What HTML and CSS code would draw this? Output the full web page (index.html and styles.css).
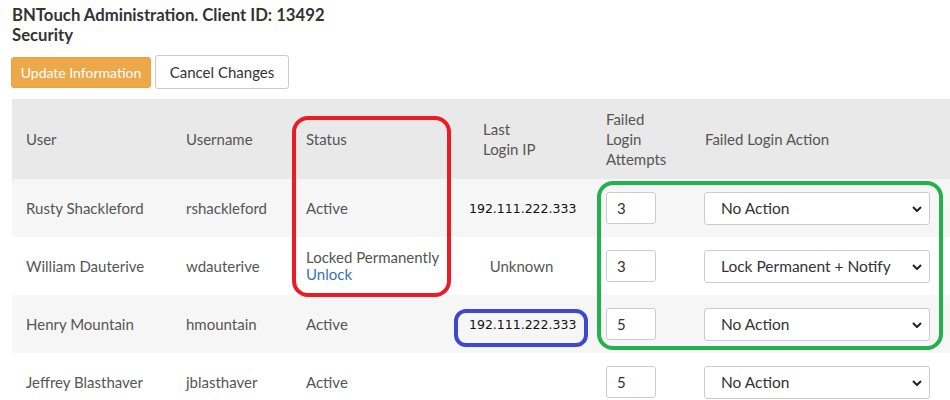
FILE: index.html
```html
<!DOCTYPE html>
<html>
<head>
<meta charset="utf-8">
<link rel="stylesheet" href="styles.css">
</head>
<body>
<div class="page">
  <h1 class="title">BNTouch Administration. Client ID: 13492<br>Security</h1>
  <div class="actions">
    <button class="btn btn-primary">Update Information</button>
    <button class="btn btn-default">Cancel Changes</button>
  </div>
  <div class="table-wrap">
    <table class="grid">
      <colgroup>
        <col class="c-user"><col class="c-uname"><col class="c-status"><col class="c-ip"><col class="c-att"><col class="c-act">
      </colgroup>
      <thead>
        <tr>
          <th>User</th>
          <th>Username</th>
          <th>Status</th>
          <th>Last<br>Login IP</th>
          <th>Failed<br>Login<br>Attempts</th>
          <th>Failed Login Action</th>
        </tr>
      </thead>
      <tbody>
        <tr class="odd">
          <td>Rusty Shackleford</td>
          <td>rshackleford</td>
          <td>Active</td>
          <td class="ip">192.111.222.333</td>
          <td><input class="num" type="text" value="3"></td>
          <td><div class="sel"><select><option>No Action</option></select><svg class="chev" viewBox="0 0 10 6" width="10" height="6"><path d="M1 1 L5 5 L9 1" fill="none" stroke="#222" stroke-width="2"/></svg></div></td>
        </tr>
        <tr>
          <td>William Dauterive</td>
          <td>wdauterive</td>
          <td class="multi">Locked Permanently<br><a class="link" href="#">Unlock</a></td>
          <td class="ip unknown">Unknown</td>
          <td><input class="num" type="text" value="3"></td>
          <td><div class="sel"><select><option>Lock Permanent + Notify</option></select><svg class="chev" viewBox="0 0 10 6" width="10" height="6"><path d="M1 1 L5 5 L9 1" fill="none" stroke="#222" stroke-width="2"/></svg></div></td>
        </tr>
        <tr class="odd">
          <td>Henry Mountain</td>
          <td>hmountain</td>
          <td>Active</td>
          <td class="ip">192.111.222.333</td>
          <td><input class="num" type="text" value="5"></td>
          <td><div class="sel"><select><option>No Action</option></select><svg class="chev" viewBox="0 0 10 6" width="10" height="6"><path d="M1 1 L5 5 L9 1" fill="none" stroke="#222" stroke-width="2"/></svg></div></td>
        </tr>
        <tr>
          <td>Jeffrey Blasthaver</td>
          <td>jblasthaver</td>
          <td>Active</td>
          <td class="ip"></td>
          <td><input class="num" type="text" value="5"></td>
          <td><div class="sel"><select><option>No Action</option></select><svg class="chev" viewBox="0 0 10 6" width="10" height="6"><path d="M1 1 L5 5 L9 1" fill="none" stroke="#222" stroke-width="2"/></svg></div></td>
        </tr>
      </tbody>
    </table>
    <div class="mark mark-red"></div>
    <div class="mark mark-green"></div>
    <div class="mark mark-blue"></div>
  </div>
</div>
</body>
</html>
```
FILE: styles.css
```css
html, body {
  margin: 0;
  padding: 0;
  background: #fff;
  overflow: hidden;
}
.page {
  padding: 5px 0 0 12px;
  font-family: Lato, "Open Sans", sans-serif;
}
.title {
  margin: 0;
  font-size: 16.7px;
  line-height: 20px;
  font-weight: 700;
  color: #333;
}
.actions {
  display: flex;
  align-items: center;
  gap: 4px;
  margin: 10px 0 0 -1px;
}
.btn {
  font-family: Lato, "Open Sans", sans-serif;
  font-size: 14px;
  border-radius: 3px;
  cursor: pointer;
}
.btn-primary {
  background: #eda84a;
  border: 1px solid #e9a23f;
  color: #fff;
  width: 140px;
  height: 31px;
}
.btn-default {
  background: #fff;
  border: 1px solid #ccc;
  color: #333;
  width: 134px;
  height: 34px;
  font-size: 15px;
}
.table-wrap {
  position: relative;
  margin-top: 10px;
  width: 938px;
}
.grid {
  border-collapse: collapse;
  width: 938px;
  table-layout: fixed;
  font-size: 15px;
  color: #555;
}
.c-user { width: 160px; }
.c-uname { width: 120px; }
.c-status { width: 177px; }
.c-ip { width: 123px; }
.c-att { width: 99px; }
.c-act { width: 259px; }
.grid th {
  background: #e9e9e9;
  height: 80px;
  text-align: left;
  font-weight: 400;
  padding: 0 0 0 14px;
  line-height: 20px;
  vertical-align: middle;
}
.grid td {
  padding: 0 0 0 14px;
  height: 58px;
  vertical-align: middle;
  line-height: 17px;
}
.grid tbody tr.odd td {
  background: #f6f6f6;
}
.grid td.ip {
  text-align: center;
  padding: 0 24px 0 0;
  font-family: "DejaVu Sans", sans-serif;
  font-size: 12.5px;
  color: #111;
}
.grid td.ip.unknown {
  font-family: Lato, "Open Sans", sans-serif;
  font-size: 15px;
  color: #555;
  padding-right: 18px;
}
.link {
  color: #3873b3;
  text-decoration: none;
}
.num {
  box-sizing: border-box;
  width: 50px;
  height: 32px;
  border: 1px solid #ccc;
  border-radius: 3px;
  padding: 0 10px;
  font-family: Lato, "Open Sans", sans-serif;
  font-size: 15px;
  color: #333;
  background: #fff;
}
.sel {
  position: relative;
  width: 226px;
  margin-left: -1px;
}
.sel select {
  appearance: none;
  -webkit-appearance: none;
  box-sizing: border-box;
  width: 226px;
  height: 33px;
  border: 1px solid #ccc;
  border-radius: 3px;
  padding: 0 0 0 16px;
  background: #fff;
  font-family: Lato, "Open Sans", sans-serif;
  font-size: 15.5px;
  color: #333;
}
.chev {
  position: absolute;
  right: 8px;
  top: 14px;
}
.mark {
  position: absolute;
  box-sizing: border-box;
  border-style: solid;
  border-width: 4px;
  pointer-events: none;
}
.mark-red {
  border-color: #ed1c24;
  left: 280px;
  top: 17px;
  width: 159px;
  height: 181px;
  border-radius: 16px;
}
.mark-green {
  border-color: #22b14c;
  left: 585px;
  top: 82px;
  width: 346px;
  height: 169px;
  border-radius: 16px;
}
.mark-blue {
  border-color: #3f48cc;
  left: 442px;
  top: 210px;
  width: 134px;
  height: 38px;
  border-radius: 12px;
}
```
